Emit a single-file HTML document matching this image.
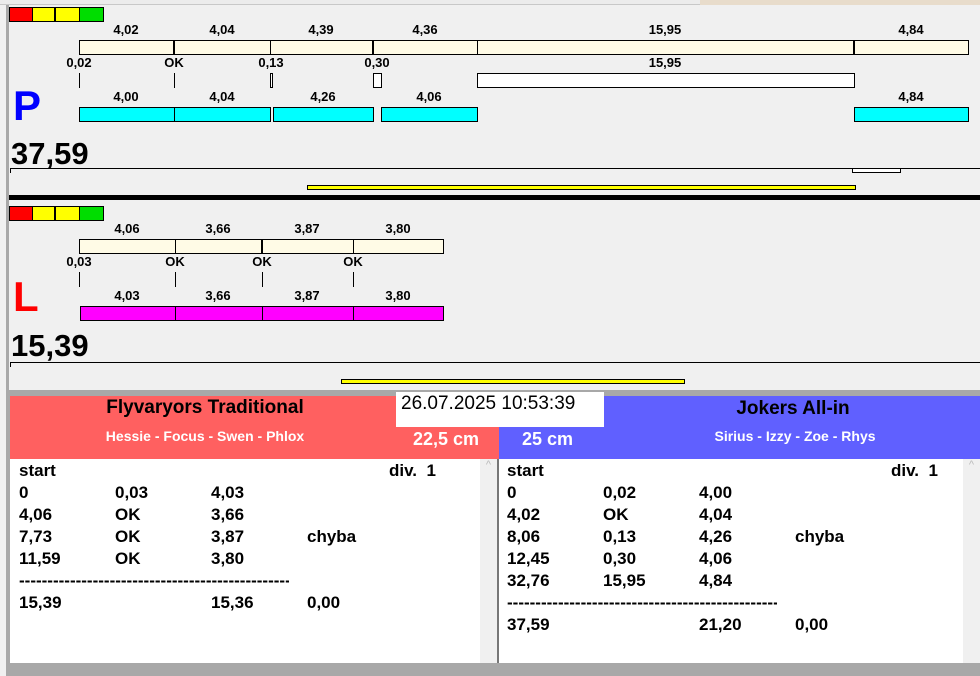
<!DOCTYPE html>
<html><head><meta charset="utf-8"><style>
*{margin:0;padding:0;box-sizing:border-box}
body{width:980px;height:676px;overflow:hidden;background:#f0f0f0;position:relative;font-family:"Liberation Sans",Arial,sans-serif;font-weight:bold}
div{position:absolute}
.t{font-size:13px;color:#000;transform:translateX(-50%);white-space:nowrap}
.cream{background:#fffbe6;border:1px solid #000;height:15px}
.cy{background:#00ffff;border:1px solid #000;height:15px}
.mg{background:#ff00ff;border:1px solid #000;height:15px}
.vl{width:1px;background:#000}
.dv{width:2px;background:#000}
.l{font-size:17px;color:#000;white-space:nowrap}
.d{font-size:17px;color:#000;white-space:nowrap;width:270px;overflow:hidden;height:22px}
</style></head><body>
<div style="left:0;top:0;width:980px;height:5px;background:#ececec;border-bottom:1px solid #c8c8c8"></div>
<div style="left:700px;top:0;width:280px;height:5px;background:#e8dccb"></div>
<div style="left:6px;top:5px;width:3px;height:385px;background:#a8a8a8"></div>

<!-- P panel -->
<div style="left:9px;top:7px;width:24px;height:15px;background:#f00;border:1px solid #000"></div>
<div style="left:32px;top:7px;width:23px;height:15px;background:#ff0;border:1px solid #000"></div>
<div style="left:55px;top:7px;width:25px;height:15px;background:#ff0;border:1px solid #000"></div>
<div style="left:79px;top:7px;width:25px;height:15px;background:#0d0;border:1px solid #000"></div>

<div class="t" style="left:126px;top:22px">4,02</div>
<div class="t" style="left:222px;top:22px">4,04</div>
<div class="t" style="left:321px;top:22px">4,39</div>
<div class="t" style="left:425px;top:22px">4,36</div>
<div class="t" style="left:665px;top:22px">15,95</div>
<div class="t" style="left:911px;top:22px">4,84</div>
<div class="cream" style="left:79px;top:40px;width:890px"></div>
<div class="dv" style="left:173px;top:40px;height:15px"></div>
<div class="vl" style="left:270px;top:40px;height:15px"></div>
<div class="dv" style="left:372px;top:40px;height:15px"></div>
<div class="vl" style="left:477px;top:40px;height:15px"></div>
<div class="dv" style="left:853px;top:40px;height:15px"></div>

<div class="t" style="left:79px;top:55px">0,02</div>
<div class="t" style="left:174px;top:55px">OK</div>
<div class="t" style="left:271px;top:55px">0,13</div>
<div class="t" style="left:377px;top:55px">0,30</div>
<div class="t" style="left:665px;top:55px">15,95</div>
<div class="vl" style="left:79px;top:73px;height:15px"></div>
<div class="vl" style="left:174px;top:73px;height:15px"></div>
<div style="left:270px;top:73px;width:3px;height:15px;border:1px solid #000;background:#fff"></div>
<div style="left:373px;top:73px;width:9px;height:15px;border:1px solid #000;background:#fff"></div>
<div style="left:477px;top:73px;width:378px;height:15px;border:1px solid #000;background:#fff"></div>

<div class="t" style="left:126px;top:89px">4,00</div>
<div class="t" style="left:222px;top:89px">4,04</div>
<div class="t" style="left:323px;top:89px">4,26</div>
<div class="t" style="left:429px;top:89px">4,06</div>
<div class="t" style="left:911px;top:89px">4,84</div>
<div class="cy" style="left:79px;top:107px;width:96px"></div>
<div class="cy" style="left:174px;top:107px;width:97px"></div>
<div class="cy" style="left:273px;top:107px;width:101px"></div>
<div class="cy" style="left:381px;top:107px;width:97px"></div>
<div class="cy" style="left:854px;top:107px;width:115px"></div>

<div style="left:13px;top:82px;font-size:42px;color:#00f">P</div>
<div style="left:11px;top:136px;font-size:31px;color:#000">37,59</div>
<div style="left:10px;top:168px;width:970px;height:1px;background:#000"></div>
<div style="left:10px;top:168px;width:1px;height:5px;background:#000"></div>
<div style="left:852px;top:168px;width:49px;height:5px;border:1px solid #000;background:#fff"></div>
<div style="left:307px;top:185px;width:549px;height:5px;border:1px solid #000;background:#ff0"></div>
<div style="left:9px;top:195px;width:971px;height:5px;background:#000"></div>

<!-- L panel -->
<div style="left:9px;top:206px;width:24px;height:15px;background:#f00;border:1px solid #000"></div>
<div style="left:32px;top:206px;width:23px;height:15px;background:#ff0;border:1px solid #000"></div>
<div style="left:55px;top:206px;width:25px;height:15px;background:#ff0;border:1px solid #000"></div>
<div style="left:79px;top:206px;width:25px;height:15px;background:#0d0;border:1px solid #000"></div>

<div class="t" style="left:127px;top:221px">4,06</div>
<div class="t" style="left:218px;top:221px">3,66</div>
<div class="t" style="left:307px;top:221px">3,87</div>
<div class="t" style="left:398px;top:221px">3,80</div>
<div class="cream" style="left:79px;top:239px;width:365px"></div>
<div class="vl" style="left:175px;top:239px;height:15px"></div>
<div class="dv" style="left:261px;top:239px;height:15px"></div>
<div class="vl" style="left:353px;top:239px;height:15px"></div>

<div class="t" style="left:79px;top:254px">0,03</div>
<div class="t" style="left:175px;top:254px">OK</div>
<div class="t" style="left:262px;top:254px">OK</div>
<div class="t" style="left:353px;top:254px">OK</div>
<div class="vl" style="left:79px;top:272px;height:15px"></div>
<div class="vl" style="left:175px;top:272px;height:15px"></div>
<div class="vl" style="left:262px;top:272px;height:15px"></div>
<div class="vl" style="left:353px;top:272px;height:15px"></div>

<div class="t" style="left:127px;top:288px">4,03</div>
<div class="t" style="left:218px;top:288px">3,66</div>
<div class="t" style="left:307px;top:288px">3,87</div>
<div class="t" style="left:398px;top:288px">3,80</div>
<div class="mg" style="left:80px;top:306px;width:96px"></div>
<div class="mg" style="left:175px;top:306px;width:88px"></div>
<div class="mg" style="left:262px;top:306px;width:92px"></div>
<div class="mg" style="left:353px;top:306px;width:91px"></div>

<div style="left:13px;top:273px;font-size:42px;color:#f00">L</div>
<div style="left:11px;top:328px;font-size:31px;color:#000">15,39</div>
<div style="left:10px;top:362px;width:970px;height:1px;background:#000"></div>
<div style="left:10px;top:362px;width:1px;height:5px;background:#000"></div>
<div style="left:341px;top:379px;width:344px;height:5px;border:1px solid #000;background:#ff0"></div>

<!-- bottom -->
<div style="left:0;top:390px;width:980px;height:286px;background:#a8a8a8"></div>
<div style="left:0;top:390px;width:6px;height:286px;background:#f0f0f0"></div>
<div style="left:10px;top:396px;width:489px;height:63px;background:#ff6060"></div>
<div style="left:499px;top:396px;width:481px;height:63px;background:#6060ff"></div>
<div style="left:396px;top:392px;width:208px;height:35px;background:#fff"></div>
<div style="left:401px;top:393px;font-size:19px;font-weight:normal;color:#000">26.07.2025 10:53:39</div>
<div class="t" style="left:205px;top:397px;font-size:19px">Flyvaryors Traditional</div>
<div class="t" style="left:205px;top:428px;font-size:14px;color:#fff">Hessie - Focus - Swen - Phlox</div>
<div style="left:413px;top:429px;font-size:18px;color:#fff">22,5 cm</div>
<div class="t" style="left:793px;top:398px;font-size:19px">Jokers All-in</div>
<div class="t" style="left:795px;top:428px;font-size:14px;color:#fff">Sirius - Izzy - Zoe - Rhys</div>
<div style="left:522px;top:429px;font-size:18px;color:#fff">25 cm</div>

<div style="left:10px;top:459px;width:487px;height:204px;background:#fff"></div>
<div style="left:480px;top:459px;width:17px;height:204px;background:#f0f0f0;color:#bbb;font-size:11px;text-align:center;font-weight:normal">^</div>
<div style="left:497px;top:459px;width:2px;height:204px;background:#777"></div>
<div style="left:499px;top:459px;width:481px;height:204px;background:#fff"></div>
<div style="left:963px;top:459px;width:17px;height:204px;background:#f0f0f0;color:#bbb;font-size:11px;text-align:center;font-weight:normal">^</div>

<div class="l" style="left:19px;top:461px">start</div><div class="l" style="left:389px;top:461px">div.&nbsp; 1</div>
<div class="l" style="left:19px;top:483px">0</div><div class="l" style="left:115px;top:483px">0,03</div><div class="l" style="left:211px;top:483px">4,03</div>
<div class="l" style="left:19px;top:505px">4,06</div><div class="l" style="left:115px;top:505px">OK</div><div class="l" style="left:211px;top:505px">3,66</div>
<div class="l" style="left:19px;top:527px">7,73</div><div class="l" style="left:115px;top:527px">OK</div><div class="l" style="left:211px;top:527px">3,87</div><div class="l" style="left:307px;top:527px">chyba</div>
<div class="l" style="left:19px;top:549px">11,59</div><div class="l" style="left:115px;top:549px">OK</div><div class="l" style="left:211px;top:549px">3,80</div>
<div class="d" style="left:19px;top:571px">------------------------------------------------------------</div>
<div class="l" style="left:19px;top:593px">15,39</div><div class="l" style="left:211px;top:593px">15,36</div><div class="l" style="left:307px;top:593px">0,00</div>

<div class="l" style="left:507px;top:461px">start</div><div class="l" style="left:891px;top:461px">div.&nbsp; 1</div>
<div class="l" style="left:507px;top:483px">0</div><div class="l" style="left:603px;top:483px">0,02</div><div class="l" style="left:699px;top:483px">4,00</div>
<div class="l" style="left:507px;top:505px">4,02</div><div class="l" style="left:603px;top:505px">OK</div><div class="l" style="left:699px;top:505px">4,04</div>
<div class="l" style="left:507px;top:527px">8,06</div><div class="l" style="left:603px;top:527px">0,13</div><div class="l" style="left:699px;top:527px">4,26</div><div class="l" style="left:795px;top:527px">chyba</div>
<div class="l" style="left:507px;top:549px">12,45</div><div class="l" style="left:603px;top:549px">0,30</div><div class="l" style="left:699px;top:549px">4,06</div>
<div class="l" style="left:507px;top:571px">32,76</div><div class="l" style="left:603px;top:571px">15,95</div><div class="l" style="left:699px;top:571px">4,84</div>
<div class="d" style="left:507px;top:593px">------------------------------------------------------------</div>
<div class="l" style="left:507px;top:615px">37,59</div><div class="l" style="left:699px;top:615px">21,20</div><div class="l" style="left:795px;top:615px">0,00</div>
</body></html>
